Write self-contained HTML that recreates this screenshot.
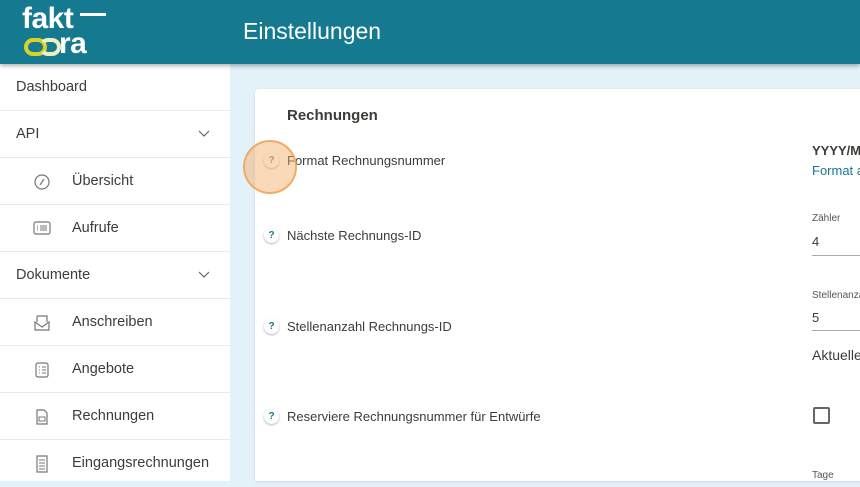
<!DOCTYPE html>
<html><head><meta charset="utf-8"><style>
*{margin:0;padding:0;box-sizing:border-box}
body{width:860px;height:481px;overflow:hidden;background:#e3f1f8;font-family:"Liberation Sans",sans-serif;color:#3c3c38;position:relative}
.hdr{position:absolute;left:0;top:0;width:860px;height:64px;background:#15798f;box-shadow:0 2px 4px rgba(0,0,0,.3);z-index:2}
.hdr h1{position:absolute;left:243px;top:18px;font-size:23px;font-weight:normal;color:#fff}
.side{position:absolute;left:0;top:64px;width:230px;height:417px;background:#fff}
.row{height:47px;border-bottom:1px solid #e6eaea;position:relative;font-size:14.5px;line-height:46px}
.row.top{padding-left:16px}
.row.sub{padding-left:72px}
.row .ic{position:absolute;left:33px;top:15px}
.chev{position:absolute;left:198px;top:19px}
.card{position:absolute;left:255px;top:89px;width:605px;height:392px;background:#fff;border-radius:4px 0 0 0;box-shadow:0 1px 3px rgba(0,0,0,.1);overflow:hidden}
.t{position:absolute;font-size:13px;color:#3c3c38;white-space:nowrap;line-height:16px}
.q{position:absolute;width:15px;height:15px;border-radius:50%;background:#fff;box-shadow:0 1px 2px rgba(0,0,0,.3);font-size:10px;font-weight:bold;text-align:center;line-height:15px;color:#15798f}
.lg{position:absolute;color:#fff;font-size:30px;font-weight:bold;letter-spacing:-0.5px;line-height:26px}
</style></head><body>
<div class="hdr">
<div class="lg" style="left:22px;top:6px">fakt</div>
<div style="position:absolute;left:80px;top:13px;width:26px;height:3px;background:#fff"></div>
<div class="lg" style="left:59px;top:31px">ra</div>
<div style="position:absolute;left:24px;top:38px;width:23px;height:18px;border:4px solid #d8d32a;border-radius:9px"></div>
<div style="position:absolute;left:39px;top:38px;width:22px;height:18px;border:4px solid #f0eec0;border-left-color:transparent;border-radius:9px"></div>
<h1>Einstellungen</h1>
</div>
<div class="side">
<div class="row top">Dashboard</div>
<div class="row top">API<svg class="chev" width="12" height="8"><path d="M1 1l5 5 5-5" fill="none" stroke="#666" stroke-width="1.2"/></svg></div>
<div class="row sub"><svg class="ic" width="18" height="18"><circle cx="9" cy="9" r="7" fill="none" stroke="#777" stroke-width="1.2"/><path d="M7 12l4-6" stroke="#777" stroke-width="1.2"/></svg>Übersicht</div>
<div class="row sub"><svg class="ic" width="18" height="16"><rect x="1" y="2" width="16" height="12" rx="2" fill="none" stroke="#777" stroke-width="1.2"/><path d="M4 6h1M4 8h1M4 10h1M7 6h7M7 8h7M7 10h7" stroke="#777"/></svg>Aufrufe</div>
<div class="row top">Dokumente<svg class="chev" width="12" height="8"><path d="M1 1l5 5 5-5" fill="none" stroke="#666" stroke-width="1.2"/></svg></div>
<div class="row sub"><svg class="ic" width="18" height="18"><path d="M4 2h10v6M4 8V2M2 8l7 5 7-5v8H2z" fill="none" stroke="#777" stroke-width="1.2"/></svg>Anschreiben</div>
<div class="row sub"><svg class="ic" width="18" height="18"><rect x="3" y="2" width="12" height="14" rx="2" fill="none" stroke="#777" stroke-width="1.2"/><path d="M6 6h1M9 6h4M6 9h1M9 9h4M6 12h1M9 12h4" stroke="#777"/></svg>Angebote</div>
<div class="row sub"><svg class="ic" width="18" height="18"><path d="M4 2h7l3 3v11H4z" fill="none" stroke="#777" stroke-width="1.2"/><rect x="6" y="9" width="6" height="4" fill="none" stroke="#777"/></svg>Rechnungen</div>
<div class="row sub" style="border-bottom:none"><svg class="ic" width="18" height="18"><path d="M4 1h10v16H4z" fill="none" stroke="#777" stroke-width="1.2"/><path d="M6 5h6M6 8h6M6 11h6M6 14h6" stroke="#777"/></svg>Eingangsrechnungen</div>
</div>
<div class="card">
<div class="t" style="left:32px;top:19px;font-size:15px;font-weight:bold">Rechnungen</div>
<div class="q" style="left:9px;top:64px;color:#888">?</div><div class="t" style="left:32px;top:64px">Format Rechnungsnummer</div>
<div class="q" style="left:9px;top:139px">?</div><div class="t" style="left:32px;top:139px">Nächste Rechnungs-ID</div>
<div class="q" style="left:9px;top:230px">?</div><div class="t" style="left:32px;top:230px">Stellenanzahl Rechnungs-ID</div>
<div class="q" style="left:9px;top:320px">?</div><div class="t" style="left:32px;top:320px">Reserviere Rechnungsnummer für Entwürfe</div>
<div class="t" style="left:557px;top:54px;font-weight:bold">YYYY/MM</div>
<div class="t" style="left:557px;top:74px;color:#15798f">Format anpassen</div>
<div class="t" style="left:557px;top:122px;font-size:10px;color:#555">Zähler</div>
<div class="t" style="left:557px;top:145px">4</div>
<div style="position:absolute;left:557px;top:166px;width:80px;height:1px;background:#aaa"></div>
<div class="t" style="left:557px;top:199px;font-size:10px;color:#555">Stellenanzahl</div>
<div class="t" style="left:557px;top:221px">5</div>
<div style="position:absolute;left:557px;top:241px;width:80px;height:1px;background:#aaa"></div>
<div class="t" style="left:557px;top:258px;font-size:14px">Aktuelles</div>
<div style="position:absolute;left:558px;top:318px;width:17px;height:17px;border:2px solid #666;border-radius:2px"></div>
<div class="t" style="left:557px;top:379px;font-size:10px;color:#555">Tage</div>
</div>
<div style="position:absolute;left:243px;top:140px;width:54px;height:54px;border-radius:50%;background:rgba(245,170,100,.45);border:2px solid rgba(240,160,80,.8)"></div>
</body></html>
